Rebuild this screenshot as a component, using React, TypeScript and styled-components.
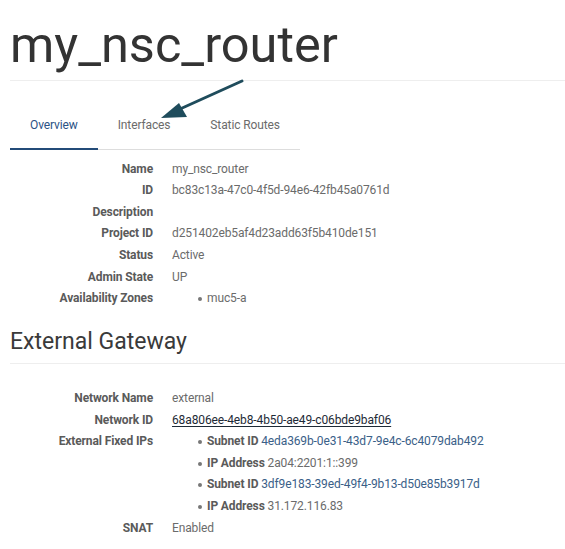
import React from "react";
import styled, { createGlobalStyle } from "styled-components";

const Global = createGlobalStyle`
  html, body { margin: 0; padding: 0; background: #fff; }
  body { font-family: Roboto, "Liberation Sans", sans-serif; font-size: 12px; color: #666; letter-spacing: -0.12px; }
`;

const Page = styled.div`
  padding: 17px 0 20px 10px;
  position: relative;
`;

const Title = styled.h1`
  margin: 0;
  font-size: 50.5px;
  font-weight: 400;
  line-height: 1.1;
  letter-spacing: 0;
  color: #333;
  padding-bottom: 7px;
  border-bottom: 1px solid #eee;
`;

const TabBar = styled.ul`
  display: inline-flex;
  list-style: none;
  margin: 20px 0 0;
  padding: 0;
  border-bottom: 1px solid #ddd;
`;

const Tab = styled.li<{ $active?: boolean }>`
  padding: 16px 20px 14px;
  line-height: 17px;
  margin-bottom: -1px;
  border-bottom: 2px solid ${(p) => (p.$active ? "#234b78" : "transparent")};
  color: ${(p) => (p.$active ? "#2b5285" : "#6b6b6b")};
  font-size: 12px;
`;

const Details = styled.dl<{ $top?: number }>`
  display: grid;
  grid-template-columns: 143px 1fr;
  column-gap: 19px;
  margin: ${(p) => p.$top ?? 9}px 0 0;
  line-height: 21.6px;
`;

const Label = styled.dt`
  font-weight: 700;
  text-align: right;
  color: #5a5a5a;
  white-space: nowrap;
`;

const Value = styled.dd`
  margin: 0;
  color: #6b6b6b;
  min-height: 21.6px;
`;

const Link = styled.a<{ $tone?: "dark" | "blue" }>`
  color: ${(p) => (p.$tone === "blue" ? "#3a6088" : "#1e2a36")};
  text-decoration: ${(p) => (p.$tone === "blue" ? "none" : "underline")};
  text-underline-offset: 2px;
`;

const Bullets = styled.ul`
  list-style: none;
  margin: 0;
  padding: 0 0 0 25px;
`;

const Bullet = styled.li`
  position: relative;
  padding-left: 10px;
  &::before {
    content: "";
    position: absolute;
    left: 1px;
    top: 9px;
    width: 4px;
    height: 4px;
    border-radius: 50%;
    background: #777;
  }
`;

const Key = styled.b`
  font-weight: 700;
  color: #5a5a5a;
`;

const Section = styled.h2`
  margin: 19px 0 0;
  font-size: 23px;
  font-weight: 400;
  line-height: 1.1;
  letter-spacing: 0;
  color: #3a3a3a;
  padding-bottom: 9px;
  border-bottom: 1px solid #eee;
`;

const Arrow = styled.svg`
  position: absolute;
  left: 160px;
  top: 76px;
  overflow: visible;
`;

export default function App() {
  return (
    <>
      <Global />
      <Page>
        <Title>my_nsc_router</Title>
        <TabBar>
          <Tab $active>Overview</Tab>
          <Tab>Interfaces</Tab>
          <Tab>Static Routes</Tab>
        </TabBar>
        <Details>
          <Label>Name</Label>
          <Value>my_nsc_router</Value>
          <Label>ID</Label>
          <Value>bc83c13a-47c0-4f5d-94e6-42fb45a0761d</Value>
          <Label>Description</Label>
          <Value></Value>
          <Label>Project ID</Label>
          <Value>d251402eb5af4d23add63f5b410de151</Value>
          <Label>Status</Label>
          <Value>Active</Value>
          <Label>Admin State</Label>
          <Value>UP</Value>
          <Label>Availability Zones</Label>
          <Value>
            <Bullets>
              <Bullet>muc5-a</Bullet>
            </Bullets>
          </Value>
        </Details>
        <Section>External Gateway</Section>
        <Details $top={24}>
          <Label>Network Name</Label>
          <Value>external</Value>
          <Label>Network ID</Label>
          <Value>
            <Link href="#">68a806ee-4eb8-4b50-ae49-c06bde9baf06</Link>
          </Value>
          <Label>External Fixed IPs</Label>
          <Value>
            <Bullets>
              <Bullet>
                <Key>Subnet ID</Key> <Link $tone="blue" href="#">4eda369b-0e31-43d7-9e4c-6c4079dab492</Link>
              </Bullet>
              <Bullet>
                <Key>IP Address</Key> 2a04:2201:1::399
              </Bullet>
              <Bullet>
                <Key>Subnet ID</Key> <Link $tone="blue" href="#">3df9e183-39ed-49f4-9b13-d50e85b3917d</Link>
              </Bullet>
              <Bullet>
                <Key>IP Address</Key> 31.172.116.83
              </Bullet>
            </Bullets>
          </Value>
          <Label>SNAT</Label>
          <Value>Enabled</Value>
        </Details>
        <Arrow width="90" height="50" viewBox="0 0 90 50">
          <line x1="82" y1="5" x2="20" y2="33" stroke="#1f4c5c" strokeWidth="3" strokeLinecap="round" />
          <polygon points="1,42 19,27 27,41" fill="#1f4c5c" />
        </Arrow>
      </Page>
    </>
  );
}
